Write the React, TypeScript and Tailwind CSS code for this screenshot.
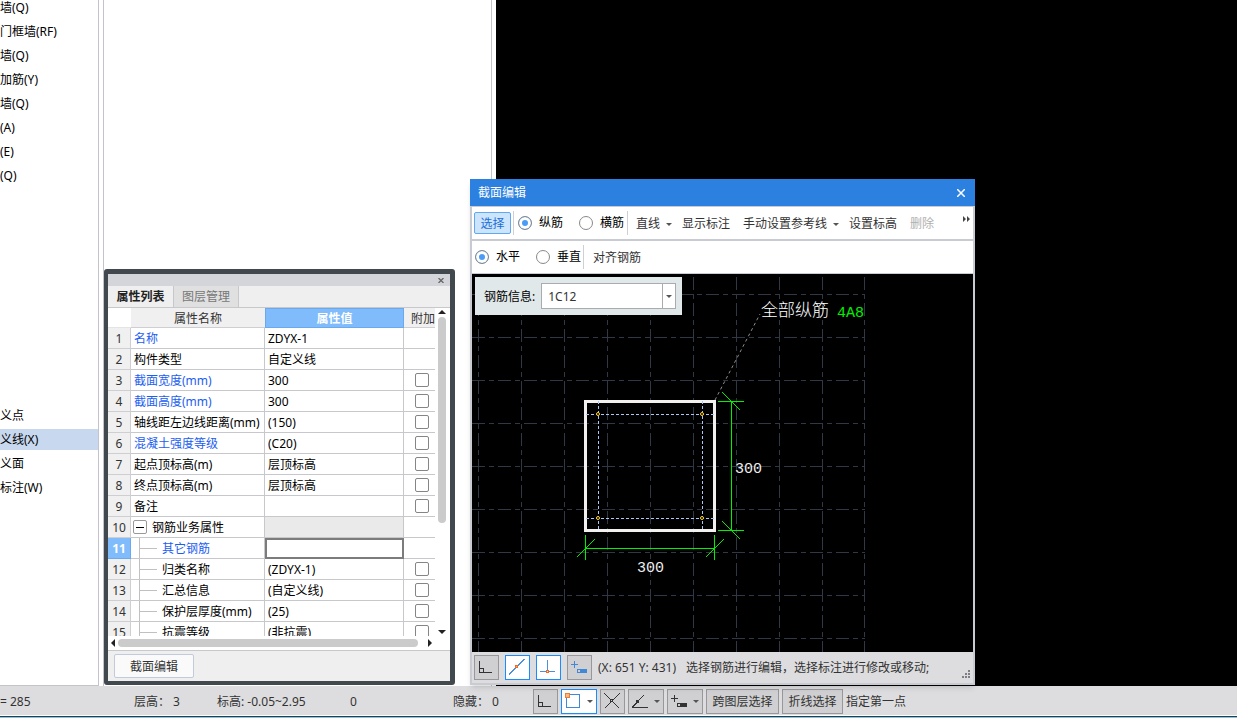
import React from 'react';
import clsx from 'clsx';

interface Property {
  name: string;
  value: string;
  link?: boolean;
  check?: boolean;
  kind?: 'group' | 'child';
  active?: boolean;
}

const topItems = ['墙(Q)', '门框墙(RF)', '墙(Q)', '加筋(Y)', '墙(Q)', '(A)', '(E)', '(Q)'];
const bottomItems = ['义点', '义线(X)', '义面', '标注(W)'];

const properties: Property[] = [
  { name: '名称', value: 'ZDYX-1', link: true },
  { name: '构件类型', value: '自定义线' },
  { name: '截面宽度(mm)', value: '300', link: true, check: true },
  { name: '截面高度(mm)', value: '300', link: true, check: true },
  { name: '轴线距左边线距离(mm)', value: '(150)', check: true },
  { name: '混凝土强度等级', value: '(C20)', link: true, check: true },
  { name: '起点顶标高(m)', value: '层顶标高', check: true },
  { name: '终点顶标高(m)', value: '层顶标高', check: true },
  { name: '备注', value: '', check: true },
  { name: '钢筋业务属性', value: '', kind: 'group' },
  { name: '其它钢筋', value: '', link: true, kind: 'child', active: true },
  { name: '归类名称', value: '(ZDYX-1)', kind: 'child', check: true },
  { name: '汇总信息', value: '(自定义线)', kind: 'child', check: true },
  { name: '保护层厚度(mm)', value: '(25)', kind: 'child', check: true },
  { name: '抗震等级', value: '(非抗震)', kind: 'child', check: true },
];

const gridX = [478, 521, 564, 607, 650, 693, 736, 779, 822, 864];
const gridY = [294, 337, 380, 423, 466, 509, 552, 595, 638];

const Caret = () => (
  <svg width="6" height="3" viewBox="0 0 6 3" className="shrink-0">
    <path d="M0 0h6L3 3z" fill="#555" />
  </svg>
);

const OrthoIcon = () => (
  <svg width="23" height="23" viewBox="0 0 23 23" fill="none" stroke="#333" shapeRendering="crispEdges">
    <path d="M4.500 5v12M4 16.500h13M4.500 12.500h4v4" />
  </svg>
);

const OffsetIcon = ({ color }: { color: string }) => (
  <svg width="23" height="23" viewBox="0 0 23 23" fill="none" stroke={color} shapeRendering="crispEdges">
    <path d="M6.500 5v7M3 8.500h7M9.500 13.500h9v3h-9z" />
    <rect x="12" y="13" width="7" height="4" fill={color} stroke="none" />
  </svg>
);

interface ToolProps {
  label: string;
  on?: boolean;
  menu?: boolean;
  children: React.ReactNode;
}

const Tool: React.FC<ToolProps> = ({ label, on, menu, children }) => (
  <button
    aria-label={label}
    className={clsx(
      'flex h-[25px] shrink-0 items-center border',
      menu ? 'w-9' : 'w-[25px]',
      on ? 'border-[#1a8cff] bg-white' : 'border-[#98989a] bg-[#d0d0d2]'
    )}
  >
    {children}
    {menu && <span className="ml-[2px]"><Caret /></span>}
  </button>
);

const Radio = ({ name, label, checked }: { name: string; label: string; checked?: boolean }) => (
  <label className="flex shrink-0 items-center gap-[7px] text-black">
    <input
      type="radio"
      name={name}
      defaultChecked={checked}
      className="size-[14px] appearance-none rounded-full border border-[#888] bg-white checked:bg-[#4b9cf5] checked:shadow-[inset_0_0_0_3px_white]"
    />
    {label}
  </label>
);

const Sidebar = () => (
  <nav className="w-[99px] shrink-0 overflow-hidden border-r border-b border-[#c3c3cb] bg-white text-black">
    <ul className="-mt-1">
      {topItems.map((item, i) => (
        <li key={i} className="flex h-6 items-center whitespace-nowrap">{item}</li>
      ))}
    </ul>
    <ul className="mt-[215px]">
      {bottomItems.map((item) => (
        <li key={item} className="flex h-6 items-center">
          <span className={clsx('h-[21px] w-full leading-[21px]', item === '义线(X)' && 'bg-[#c8d8ef]')}>{item}</span>
        </li>
      ))}
    </ul>
  </nav>
);

const PropertyRow = ({ row, index }: { row: Property; index: number }) => (
  <tr className="h-[21px]">
    <th
      scope="row"
      className={clsx(
        'border-r border-b p-0 pt-[2px] text-center',
        row.active ? 'border-[#6aa9ee] bg-[#80bbfb] font-bold text-white' : 'border-[#cfcfd3] bg-[#f0f0f0] font-normal text-[#333]'
      )}
    >
      {index + 1}
    </th>
    <td className={clsx('border-r border-b border-[#c6c8cc] p-0', row.link ? 'text-[#1c5ef0]' : 'text-black')}>
      <div className="flex h-5 items-center overflow-hidden pl-[3px] whitespace-nowrap">
        {row.kind === 'group' && (
          <button aria-label="折叠" className="mr-[5px] -ml-px flex size-[14px] items-center justify-center rounded-[2px] border border-[#999] bg-white">
            <span className="h-px w-2 bg-black" />
          </button>
        )}
        {row.kind === 'child' && (
          <span className="mr-1 ml-[5px] flex h-5 w-[19px] items-center border-l border-[#c0c0c0]">
            <span className="h-px w-[17px] bg-[#c0c0c0]" />
          </span>
        )}
        <span className="pt-[2px]">{row.name}</span>
      </div>
    </td>
    <td
      className={clsx(
        'border-r border-b border-[#c6c8cc] p-0 pt-[2px] pl-[3px] text-black',
        row.kind === 'group' && 'bg-[#eaeaea]',
        row.active && 'outline-2 -outline-offset-2 outline-[#7c7c7c]'
      )}
    >
      {row.value}
    </td>
    <td className="border-b border-[#c6c8cc] p-0 pl-[11px]">
      {row.check && (
        <input
          type="checkbox"
          aria-label={row.name}
          className="block size-[14px] appearance-none rounded-[2px] border border-[#858585] bg-white"
        />
      )}
    </td>
  </tr>
);

const PropertyPanel = () => (
  <section className="absolute top-[269px] left-[104px] w-[351px] rounded-[3px] border-4 border-t-[5px] border-r-[5px] border-[#41484e] bg-[#efefef]">
    <header className="flex h-3 items-center justify-end bg-[#d3d5da] pt-px pr-1.5">
      <button aria-label="关闭">
        <svg width="6" height="5" viewBox="0 0 6 5" stroke="#666" strokeWidth="1.300">
          <path d="M.5 0l5 5M5.500 0l-5 5" />
        </svg>
      </button>
    </header>
    <div role="tablist" className="flex h-[22px] border-b border-[#c6c8cc]">
      <button role="tab" aria-selected="true" className="w-[66px] border-r border-[#c6c8cc] font-bold text-[#222]">属性列表</button>
      <button role="tab" aria-selected="false" className="w-[65px] border-r border-[#c6c8cc] bg-[#e0e0e1] text-[#777]">图层管理</button>
    </div>
    <div className="flex h-[328px] bg-white">
      <div className="min-w-0 flex-1 overflow-hidden">
        <table className="w-full table-fixed border-separate border-spacing-0 leading-4">
          <thead>
            <tr className="h-5 text-[#333]">
              <th className="w-[23px] border-b border-[#e4e4e4] p-0" />
              <th className="w-[134px] border-b border-[#cfcfd3] bg-[#f0f0f0] p-0 pt-[2px] text-center font-normal">属性名称</th>
              <th className="w-[139px] border border-[#6aa9ee] bg-[#80bbfb] p-0 pt-px text-center font-bold text-white">属性值</th>
              <th className="overflow-hidden border-b border-[#cfcfd3] bg-[#f0f0f0] p-0 pt-[2px] pl-[7px] text-left font-normal whitespace-nowrap">附加</th>
            </tr>
          </thead>
          <tbody>
            {properties.map((row, i) => (
              <PropertyRow key={row.name} row={row} index={i} />
            ))}
          </tbody>
        </table>
      </div>
      <div className="flex w-[15px] flex-col items-center justify-between py-[2px] pr-px">
        <svg width="8" height="4" viewBox="0 0 8 4"><path d="M0 4h8L4 0z" fill="#222" /></svg>
        <span className="mt-[3px] mb-auto h-[206px] w-2 rounded-full bg-[#cbcbcb]" />
        <svg width="8" height="4" viewBox="0 0 8 4"><path d="M0 0h8L4 4z" fill="#222" /></svg>
      </div>
    </div>
    <div className="flex h-[15px] items-center border-b border-[#c6c8cc] bg-white pl-[3px]">
      <svg width="4" height="8" viewBox="0 0 4 8"><path d="M4 0v8L0 4z" fill="#222" /></svg>
      <span className="ml-[3px] h-2 w-[300px] rounded-full bg-[#cbcbcb]" />
      <svg width="4" height="8" viewBox="0 0 4 8" className="ml-2.5"><path d="M0 0v8l4-4z" fill="#222" /></svg>
    </div>
    <div className="px-1.5 py-[3px]">
      <button className="block h-6 w-20 rounded-[2px] border border-[#c3cadb] bg-[#fafafa] pt-px text-[#333]">截面编辑</button>
    </div>
  </section>
);

// coordinates follow the drawing area, which starts at 472,274
const SectionDrawing = () => (
  <svg width="501" height="378" viewBox="472 274 501 378" className="block" fill="none">
    <g stroke="#303745" strokeDasharray="13 4 5 4" shapeRendering="crispEdges">
      {gridX.map((x) => <path key={x} d={`M${x + 0.5} 277V652`} />)}
      {gridY.map((y) => <path key={y} d={`M472 ${y + 0.5}H865`} />)}
    </g>
    <rect x="585.500" y="401.500" width="129" height="129" stroke="#f3f0f0" strokeWidth="3" />
    <path
      d="M598.500 401V531M702.500 401V531M586 414.500H715M586 518.500H715"
      stroke="#a9c8f5"
      strokeDasharray="3 2"
      shapeRendering="crispEdges"
    />
    <g stroke="#ffd52e" fill="#000">
      {[598, 702].map((x) => [414, 518].map((y) => <circle key={`${x}-${y}`} cx={x} cy={y} r="1.500" />))}
    </g>
    <path d="M715 400L760 314" stroke="#8c8c8c" strokeDasharray="3 3" />
    <g stroke="#00f000">
      <path
        d="M731.500 401V531M718 401.500H744M718 530.500H744M585 548.500H715M585.500 535V560M714.500 535V560"
        shapeRendering="crispEdges"
      />
      <path d="M722 392l18 18M722 521l18 18M577 557l18-18M706 557l18-18" />
    </g>
    <g className="font-['Liberation_Mono','Noto_Sans_CJK_SC',monospace] text-[15px]" fill="#eee">
      <text x="735" y="473">300</text>
      <text x="637" y="572">300</text>
      <text x="837" y="317" fill="#00f000">4A8</text>
    </g>
    <text x="761" y="316" fill="#fff" className="font-['Noto_Sans_CJK_SC',sans-serif] text-[17px] font-light">全部纵筋</text>
  </svg>
);

const SectionDialog = () => (
  <section role="dialog" aria-label="截面编辑" className="absolute top-[179px] left-[470px] w-[505px] shadow-md">
    <header className="flex h-[27px] items-center justify-between bg-[#2c80e0] px-2 text-white">
      <h2>截面编辑</h2>
      <button aria-label="关闭" className="mr-0.5">
        <svg width="8" height="8" viewBox="0 0 8 8" stroke="#fff" strokeWidth="1.500"><path d="M0 0l8 8M8 0L0 8" /></svg>
      </button>
    </header>
    <div className="border-2 border-t-0 border-[#c9cbd2] bg-white text-[#333]">
      <div className="flex h-[35px] items-center border-t border-b-2 border-[#c9cbd2] pl-0.5 whitespace-nowrap">
        <button className="h-[22px] w-[37px] rounded-[2px] border border-[#5fa8f2] bg-[#cce5fc] pt-px text-[#1a6fd6]">选择</button>
        <div className="ml-0.5 flex h-6 items-center gap-4 border-x border-[#d0d0d4] pr-[3px] pl-1">
          <Radio name="bar" label="纵筋" checked />
          <Radio name="bar" label="横筋" />
        </div>
        <button className="ml-2 flex items-center gap-1.5 pt-[2px]">直线<Caret /></button>
        <button className="ml-2.5 pt-[2px]">显示标注</button>
        <button className="ml-[13px] flex items-center gap-1.5 pt-[2px]">手动设置参考线<Caret /></button>
        <button className="ml-2.5 pt-[2px]">设置标高</button>
        <button disabled className="ml-[13px] pt-[2px] text-[#b0b0b0]">删除</button>
        <button aria-label="更多" className="mr-[3px] mb-2 ml-auto">
          <svg width="7" height="6" viewBox="0 0 7 6" fill="#444"><path d="M0 0l3 3-3 3zM4 0l3 3-3 3z" /></svg>
        </button>
      </div>
      <div className="flex h-[33px] items-center border-b border-[#c9cbd2] pl-[3px]">
        <div className="flex h-6 items-center gap-4 border-r border-[#d0d0d4] pr-[2px]">
          <Radio name="direction" label="水平" checked />
          <Radio name="direction" label="垂直" />
        </div>
        <button className="ml-[9px] pt-[2px]">对齐钢筋</button>
      </div>
      <div className="relative bg-black">
        <SectionDrawing />
        <div className="absolute top-[3px] left-[3px] flex h-[38px] w-[207px] items-center bg-[#e0e8ea] pr-1.5 pl-[9px]">
          <label htmlFor="rebar" className="mr-1.5 shrink-0 pt-[2px] text-black">钢筋信息:</label>
          <div className="relative flex-1">
            <select id="rebar" className="block h-[26px] w-full appearance-none border border-[#a9abae] bg-white pt-px pl-1.5 text-[12px] text-[#333]">
              <option>1C12</option>
            </select>
            <span className="pointer-events-none absolute inset-y-px right-px flex w-[13px] items-center justify-center border-l border-[#a9abae]">
              <Caret />
            </span>
          </div>
        </div>
      </div>
      <footer className="flex h-[31px] items-center gap-1.5 bg-[#dddddf] px-0.5">
        <Tool label="正交"><OrthoIcon /></Tool>
        <Tool label="中点" on>
          <svg width="23" height="23" viewBox="0 0 23 23" fill="none" shapeRendering="crispEdges">
            <path d="M3 18.500L18.500 3" stroke="#4a90dd" />
            <rect x="9.500" y="9.500" width="2" height="2" fill="#f7a563" stroke="#ed6c1f" />
          </svg>
        </Tool>
        <Tool label="垂点" on>
          <svg width="23" height="23" viewBox="0 0 23 23" fill="none" shapeRendering="crispEdges">
            <path d="M10.500 4v11M3 15.500h15" stroke="#4a90dd" />
            <rect x="9.500" y="14.500" width="2" height="2" fill="#ffe7d5" stroke="#ed6c1f" />
          </svg>
        </Tool>
        <Tool label="偏移"><OffsetIcon color="#4088d8" /></Tool>
        <p className="flex gap-2.5 whitespace-nowrap">
          <span>(X: 651 Y: 431)</span>
          <span>选择钢筋进行编辑，选择标注进行修改或移动;</span>
        </p>
        <svg width="8" height="8" viewBox="0 0 8 8" className="mt-3 mr-px ml-auto" fill="#7d7f84">
          <path d="M6 0h2v2H6zM3 3h2v2H3zM6 3h2v2H6zM0 6h2v2H0zM3 6h2v2H3zM6 6h2v2H6z" />
        </svg>
      </footer>
    </div>
  </section>
);

const StatusBar = () => (
  <footer className="flex h-8 shrink-0 flex-col justify-end border-b border-[#8fc3d8] bg-[#1d4253] pb-px">
    <div className="flex flex-1 items-center gap-[3px] border-b border-white bg-[#dddddf] pt-px whitespace-nowrap text-[#333]">
      <div className="flex w-[530px] shrink-0 pt-px">
        <span className="w-[134px]">= 285</span>
        <span className="w-[83px]">层高： 3</span>
        <span className="w-[133px]">标高: -0.05~2.95</span>
        <span className="w-[103px]">0</span>
        <span>隐藏： 0</span>
      </div>
      <Tool label="正交"><OrthoIcon /></Tool>
      <Tool label="框选" on menu>
        <svg width="23" height="23" viewBox="0 0 23 23" fill="none" shapeRendering="crispEdges">
          <rect x="4.500" y="4.500" width="13" height="13" stroke="#4088d8" />
          <rect x="3.500" y="3.500" width="4" height="4" fill="#f9b98a" stroke="#ed7d31" />
        </svg>
      </Tool>
      <Tool label="交点">
        <svg width="23" height="23" viewBox="0 0 23 23" stroke="#333" shapeRendering="crispEdges">
          <path d="M3.500 3.500l15 15M18.500 3.500l-15 15" />
          <rect x="9.500" y="9.500" width="2" height="2" fill="#d0d0d2" />
        </svg>
      </Tool>
      <Tool label="角度" menu>
        <svg width="23" height="23" viewBox="0 0 23 23" stroke="#333" shapeRendering="crispEdges">
          <path d="M3 17.500h16" />
          <path d="M3.500 17L14.500 5.500" />
          <rect x="7.500" y="10.500" width="2" height="2" fill="#333" />
        </svg>
      </Tool>
      <Tool label="偏移" menu><OffsetIcon color="#333" /></Tool>
      <button className="h-[25px] w-[73px] shrink-0 border border-[#98989a] bg-[#d0d0d2] pt-px">跨图层选择</button>
      <button className="h-[25px] w-[61px] shrink-0 border border-[#98989a] bg-[#d0d0d2] pt-px">折线选择</button>
      <span className="pt-px">指定第一点</span>
    </div>
  </footer>
);

export default function App() {
  return (
    <div className="relative flex h-screen flex-col overflow-hidden bg-white font-['Noto_Sans','Noto_Sans_CJK_SC',sans-serif] text-[12px] leading-4">
      <main className="flex min-h-0 flex-1">
        <Sidebar />
        <div className="ml-1 w-[389px] shrink-0 border-x border-[#c3c3cb] bg-white" />
        <div className="ml-1 flex-1 bg-black" />
      </main>
      <StatusBar />
      <PropertyPanel />
      <SectionDialog />
    </div>
  );
}
